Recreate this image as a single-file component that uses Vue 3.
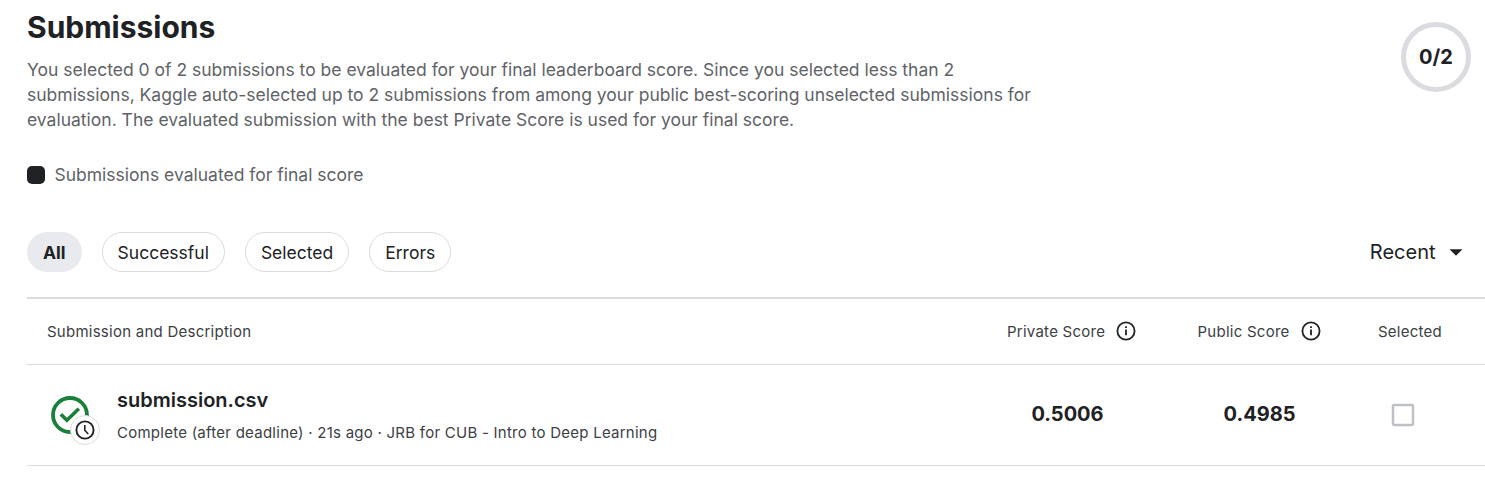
<script setup>
const filters = ['All', 'Successful', 'Selected', 'Errors']
const active = 'All'
const columns = [
  { label: 'Private Score', cls: 'private' },
  { label: 'Public Score', cls: 'public' },
]
const rows = [
  {
    name: 'submission.csv',
    detail: 'Complete (after deadline) · 21s ago · JRB for CUB - Intro to Deep Learning',
    privateScore: '0.5006',
    publicScore: '0.4985',
  },
]
</script>

<template>
  <main class="page">
    <header class="top">
      <div class="intro">
        <h1>Submissions</h1>
        <p>
          You selected 0 of 2 submissions to be evaluated for your final leaderboard score. Since you selected less than 2<br />
          submissions, Kaggle auto-selected up to 2 submissions from among your public best-scoring unselected submissions for<br />
          evaluation. The evaluated submission with the best Private Score is used for your final score.
        </p>
      </div>
      <div class="ring">0/2</div>
    </header>

    <div class="legend"><span class="swatch"></span><span>Submissions evaluated for final score</span></div>

    <div class="toolbar">
      <div class="chips">
        <button v-for="f in filters" :key="f" class="chip" :class="{ active: f === active }">{{ f }}</button>
      </div>
      <div class="sort">
        <span>Recent</span>
        <svg width="14" height="7" viewBox="0 0 14 7"><path d="M0.5 0.3h13L7 6.8z" fill="#202124" /></svg>
      </div>
    </div>

    <section class="table">
      <div class="row head">
        <div class="desc">Submission and Description</div>
        <div v-for="c in columns" :key="c.label" class="col" :class="c.cls">
          <span>{{ c.label }}</span>
          <svg class="info" width="20" height="20" viewBox="0 0 20 20">
            <circle cx="10" cy="10" r="8.6" fill="none" stroke="#202124" stroke-width="1.8" />
            <path d="M9.1 5.2h1.8v1.8H9.1zM9.1 8.6h1.8v5.6H9.1z" fill="#202124" />
          </svg>
        </div>
        <div class="sel">Selected</div>
      </div>

      <div v-for="r in rows" :key="r.name" class="row item">
        <div class="status">
          <svg class="check" width="38" height="38" viewBox="0 0 38 38" fill="none" stroke="#188038" stroke-width="3.8">
            <circle cx="19" cy="19" r="17" />
            <path d="M9.8 18.2l6.1 6.1L27.8 12.8" stroke-width="3.6" />
          </svg>
          <span class="badge">
            <svg width="20" height="20" viewBox="0 0 20 20" fill="none" stroke="#202124">
              <circle cx="10" cy="10" r="8.6" stroke-width="1.9" />
              <path d="M9.8 5v5.3l3.4 3.7" stroke-width="1.6" />
            </svg>
          </span>
        </div>
        <div class="file">
          <div class="name">{{ r.name }}</div>
          <div class="detail">{{ r.detail }}</div>
        </div>
        <div class="score private">{{ r.privateScore }}</div>
        <div class="score public">{{ r.publicScore }}</div>
        <div class="pick">
          <svg class="box" width="24" height="24" viewBox="0 0 24 24" fill="none">
            <rect x="2" y="2" width="20" height="20" rx="1.2" stroke="#bdc1c6" stroke-width="2.5" />
          </svg>
        </div>
      </div>
    </section>
  </main>
</template>

<style>
body {
  margin: 0;
  background: #fff;
}
</style>

<style scoped>
.page {
  box-sizing: border-box;
  width: 1485px;
  height: 485px;
  padding-left: 27px;
  overflow: hidden;
  font-family: Inter, "Liberation Sans", sans-serif;
  color: #202124;
}
.top {
  display: flex;
  justify-content: space-between;
  height: 132px;
}
h1 {
  margin: 9px 0 0;
  font-size: 30px;
  line-height: 37px;
  font-weight: 700;
}
p {
  margin: 11px 0 0;
  font-size: 17.5px;
  line-height: 25px;
  color: #5f6368;
  white-space: nowrap;
}
.ring {
  box-sizing: border-box;
  width: 70px;
  height: 70px;
  margin: 22px 14px 0 0;
  border: 5px solid #dadce0;
  border-radius: 50%;
  text-align: center;
  font-size: 20px;
  line-height: 60px;
  font-weight: 700;
}
.legend {
  display: flex;
  align-items: center;
  gap: 9.5px;
  height: 25px;
  margin-top: 30px;
  font-size: 17.5px;
  color: #5f6368;
}
.swatch {
  width: 18px;
  height: 18px;
  border-radius: 5px;
  background: #202124;
}
.toolbar {
  display: flex;
  justify-content: space-between;
  align-items: center;
  height: 40px;
  margin-top: 45px;
}
.chips {
  display: flex;
  gap: 20px;
}
.chip {
  box-sizing: border-box;
  height: 40px;
  padding: 2px 15px 0;
  border: 1px solid #dadce0;
  border-radius: 20px;
  background: #fff;
  font-family: inherit;
  font-size: 17.5px;
  line-height: 36px;
  color: #202124;
}
.chip.active {
  border-color: #e8eaed;
  background: #e8eaed;
  font-weight: 700;
}
.sort {
  display: flex;
  align-items: center;
  gap: 13.5px;
  margin-right: 22px;
  font-size: 20px;
}
.table {
  margin-top: 25px;
  border-top: 2px solid #dadce0;
}
.row {
  display: grid;
  border-bottom: 1px solid #dadce0;
}
.head {
  grid-template-columns: 980px 190.5px 180.5px 107px;
  align-items: center;
  height: 65px;
  font-size: 15px;
  letter-spacing: 0.25px;
  color: #3c4043;
}
.desc {
  padding-left: 20px;
}
.col {
  display: flex;
  align-items: center;
  gap: 11.5px;
}
.col.private {
  gap: 10.8px;
}
.info {
  margin-top: -1px;
}
.item {
  grid-template-columns: 90px 854px 192px 193px 129px;
  height: 100px;
}
.status {
  position: relative;
}
.check {
  display: block;
  margin: 31px 0 0 23.5px;
}
.badge {
  position: absolute;
  left: 43px;
  top: 50px;
  display: flex;
  box-sizing: border-box;
  width: 30px;
  height: 30px;
  align-items: center;
  justify-content: center;
  border: 1px solid #dadce0;
  border-radius: 50%;
  background: #fff;
}
.name {
  margin-top: 23px;
  font-size: 20px;
  line-height: 25px;
  font-weight: 600;
}
.detail {
  margin-top: 10px;
  font-size: 15px;
  line-height: 20px;
  letter-spacing: 0.25px;
  color: #3c4043;
}
.score {
  width: 193px;
  text-align: center;
  font-size: 20px;
  line-height: 99px;
  font-weight: 700;
}
.pick {
  padding: 38px 0 0 35px;
}
.box {
  display: block;
}
</style>
